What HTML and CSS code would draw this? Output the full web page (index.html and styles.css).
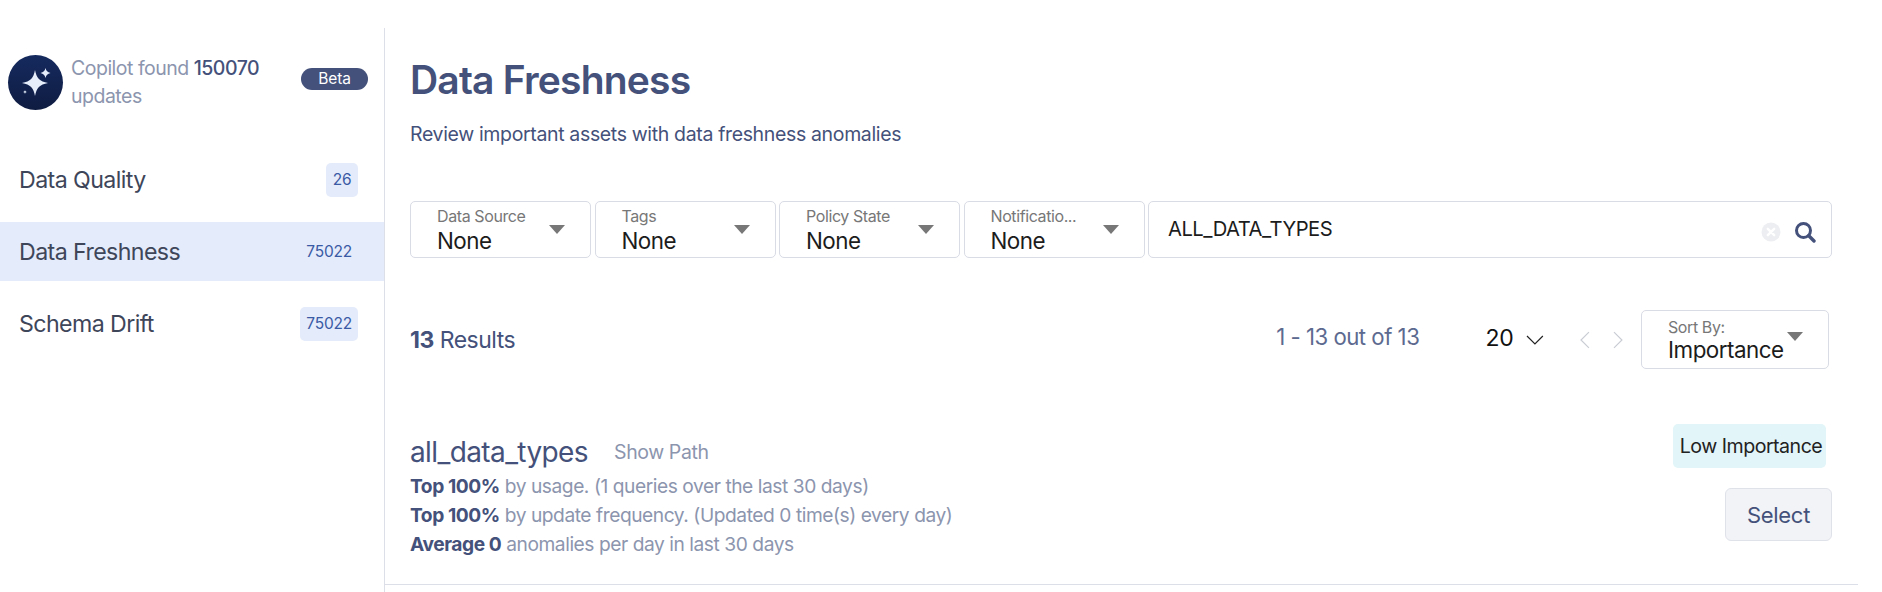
FILE: index.html
```html
<!DOCTYPE html>
<html lang="en">
<head>
<meta charset="utf-8">
<title>Data Freshness</title>
<link rel="stylesheet" href="styles.css">
</head>
<body>
<div class="page">
  <aside class="sidebar">
    <div class="copilot">
      <div class="copilot-icon">
        <svg width="55" height="55" viewBox="0 0 55 55">
          <path d="M27 15 C28.500 23 31.500 26.500 40 28 C31.500 29.500 28.500 33 27 41 C25.500 33 22.500 29.500 14 28 C22.500 26.500 25.500 23 27 15Z" fill="#e6edfb"/>
          <path d="M37.500 13 C38.200 16 39.500 17.300 42.500 18 C39.500 18.700 38.200 20 37.500 23 C36.800 20 35.500 18.700 32.500 18 C35.500 17.300 36.800 16 37.500 13Z" fill="#e6edfb"/>
          <path d="M17 35 C17.200 36.200 17.800 36.800 19 37 C17.800 37.200 17.200 37.800 17 39 C16.800 37.800 16.200 37.200 15 37 C16.200 36.800 16.800 36.200 17 35Z" fill="#e6edfb"/>
        </svg>
      </div>
      <p class="copilot-text">Copilot found <b>150070</b> updates</p>
      <span class="beta">Beta</span>
    </div>
    <nav class="nav">
      <a class="nav-item"><span>Data Quality</span><span class="count">26</span></a>
      <a class="nav-item active"><span>Data Freshness</span><span class="count">75022</span></a>
      <a class="nav-item"><span>Schema Drift</span><span class="count">75022</span></a>
    </nav>
  </aside>
  <main class="main">
    <h1 class="title">Data Freshness</h1>
    <p class="subtitle">Review important assets with data freshness anomalies</p>
    <div class="filters">
      <div class="select"><div class="select-text"><span class="select-label">Data Source</span><span class="select-value">None</span></div><i class="caret"></i></div>
      <div class="select"><div class="select-text"><span class="select-label">Tags</span><span class="select-value">None</span></div><i class="caret"></i></div>
      <div class="select"><div class="select-text"><span class="select-label">Policy State</span><span class="select-value">None</span></div><i class="caret"></i></div>
      <div class="select"><div class="select-text"><span class="select-label">Notificatio...</span><span class="select-value">None</span></div><i class="caret"></i></div>
      <div class="search">
        <span class="search-text">ALL_DATA_TYPES</span>
        <svg class="clear" width="20" height="20" viewBox="0 0 20 20"><circle cx="10" cy="10" r="9.500" fill="#eceef1"/><path d="M6.800 6.800 13.200 13.200M13.200 6.800 6.800 13.200" stroke="#fff" stroke-width="2.400" stroke-linecap="round"/></svg>
        <svg class="magnifier" width="22" height="22" viewBox="0 0 22 22"><circle cx="9.500" cy="9.500" r="7" fill="none" stroke="#44517a" stroke-width="3"/><path d="M14.800 14.800 20 20" stroke="#44517a" stroke-width="3.400" stroke-linecap="round"/></svg>
      </div>
    </div>
    <div class="results-bar">
      <div class="results"><b>13</b> Results</div>
      <div class="range">1 - 13 out of 13</div>
      <div class="page-size">20</div>
      <svg class="chev-down" width="18" height="10" viewBox="0 0 18 10"><path d="M1 1 9 9 17 1" fill="none" stroke="#222" stroke-width="1.200"/></svg>
      <svg class="pager" width="10" height="18" viewBox="0 0 10 18"><path d="M9 1 1 9 9 17" fill="none" stroke="#c9ccd3" stroke-width="1.200"/></svg>
      <svg class="pager next" width="10" height="18" viewBox="0 0 10 18"><path d="M1 1 9 9 1 17" fill="none" stroke="#c9ccd3" stroke-width="1.200"/></svg>
      <div class="sort"><div class="select-text"><span class="select-label">Sort By:</span><span class="select-value sort-value">Importance</span></div><i class="caret sort-caret"></i></div>
    </div>
    <section class="asset">
      <div class="asset-info">
        <div class="asset-head"><span class="asset-name">all_data_types</span><span class="show-path">Show Path</span></div>
        <p class="asset-line"><b>Top 100%</b> by usage. (1 queries over the last 30 days)</p>
        <p class="asset-line"><b>Top 100%</b> by update frequency. (Updated 0 time(s) every day)</p>
        <p class="asset-line"><b>Average 0</b> anomalies per day in last 30 days</p>
      </div>
      <div class="asset-actions">
        <span class="importance">Low Importance</span>
        <button class="select-btn">Select</button>
      </div>
    </section>
  </main>
</div>
</body>
</html>
```

FILE: styles.css
```css
* { box-sizing: border-box; }
html, body { margin: 0; padding: 0; background: #fff; }
body { font-family: Inter, "Noto Sans", sans-serif; height: 592px; overflow: hidden; }
p, h1 { margin: 0; }
.page { display: flex; padding-top: 28px; height: 592px; }

.sidebar { width: 385px; flex: none; border-right: 1px solid #dcdfe8; }
.copilot { display: flex; align-items: center; padding: 27px 16px 0 8px; }
.copilot-icon { width: 55px; height: 55px; border-radius: 50%; flex: none; background: linear-gradient(180deg, #152a5e, #0f1c42); margin-right: 8px; }
.copilot-icon svg { display: block; }
.copilot-text { width: 205px; font-size: 19.500px; line-height: 27.500px; color: #8c95ae; letter-spacing: -0.5px; margin-right: 25px; }
.copilot-text b { font-weight: 500; color: #44517a; }
.beta { width: 67px; height: 22px; margin-top: -8px; border-radius: 11px; background: #44517a; color: #fff; font-size: 15.500px; line-height: 22px; text-align: center; letter-spacing: -0.1px; }

.nav { display: flex; flex-direction: column; gap: 13px; margin-top: 40px; }
.nav-item { display: flex; align-items: center; justify-content: space-between; height: 59px; padding: 0 26px 0 19px; font-size: 23.200px; color: #3e465a; letter-spacing: -0.6px; }
.nav-item.active { background: #e4ebfa; }
.count { height: 34px; padding: 0 6px; border-radius: 5px; background: #e4ebfa; color: #3a5aa5; font-size: 15.500px; line-height: 34px; letter-spacing: -0.2px; min-width: 32px; text-align: center; }

.main { flex: none; width: 1473px; padding-left: 25px; }
.title { font-size: 39px; line-height: 48px; font-weight: 600; color: #44517a; letter-spacing: -0.8px; margin-top: 28px; }
.subtitle { font-size: 19.500px; line-height: 28px; color: #44517a; letter-spacing: -0.35px; margin-top: 16px; }

.filters { display: flex; gap: 3.500px; margin-top: 53px; padding-right: 26px; }
.select { width: 181px; height: 57px; flex: none; display: flex; align-items: center; border: 1px solid #d9dbe5; border-radius: 5px; padding-left: 26px; position: relative; }
.select-text { display: flex; flex-direction: column; }
.select-label { font-size: 16px; line-height: 20px; color: #777; letter-spacing: -0.4px; }
.select-value { font-size: 22.400px; line-height: 25px; margin-top: 2px; color: #1c1c1c; letter-spacing: -0.5px; }
.sort-value { margin-top: 0; }
.caret { position: absolute; right: 25px; top: 23px; width: 0; height: 0; border-left: 8px solid transparent; border-right: 8px solid transparent; border-top: 9px solid #777; }
.search { flex: 1; height: 57px; display: flex; align-items: center; border: 1px solid #d9dbe5; border-radius: 5px; padding: 0 15px 0 19px; }
.search-text { flex: 1; font-size: 20.200px; line-height: 28px; color: #1c1c1c; letter-spacing: -0.5px; margin-top: -1px; }
.clear { margin-right: 13px; margin-top: 5px; }
.magnifier { margin-top: 5px; }

.results-bar { display: flex; align-items: center; height: 59px; margin-top: 52px; padding-right: 29px; }
.results { font-size: 23px; color: #44517a; letter-spacing: -0.5px; width: 873px; }
.results b { font-weight: 700; }
.range { font-size: 22.200px; color: #5d6a90; letter-spacing: -0.5px; width: 211px; margin-top: -6px; }
.page-size { font-size: 23px; color: #111; letter-spacing: -0.5px; width: 41px; margin-top: -4px; }
.chev-down { margin-right: 36px; }
.pager { margin-right: 23px; }
.pager.next { margin-right: 18px; }
.sort { width: 188px; height: 59px; flex: none; display: flex; align-items: center; border: 1px solid #d9dbe5; border-radius: 5px; padding-left: 26px; position: relative; }
.sort-caret { right: 25px; top: 21px; }

.asset { display: flex; justify-content: space-between; height: 216px; margin-left: -25px; padding: 55px 26px 0 25px; border-bottom: 1px solid #dcdfe8; }
.asset-info { padding-top: 10px; }
.asset-head { display: flex; align-items: center; gap: 26px; margin-bottom: 2px; }
.asset-name { font-size: 28px; line-height: 36px; color: #44517a; letter-spacing: -0.6px; }
.show-path { font-size: 19.500px; color: #8c95ae; letter-spacing: -0.4px; }
.asset-line { font-size: 19.200px; line-height: 28.800px; color: #8c95ae; letter-spacing: -0.45px; }
.asset-line b { font-weight: 700; color: #44517a; }
.asset-actions { display: flex; flex-direction: column; align-items: flex-end; }
.importance { width: 153px; height: 44px; margin-right: 6px; padding-left: 3px; border-radius: 5px; background: #e2f5f8; color: #222; font-size: 19.600px; line-height: 44px; text-align: center; letter-spacing: -0.5px; }
.select-btn { width: 107px; height: 53px; margin-top: 20px; border: 1px solid #e0e2ea; border-radius: 6px; background: #f1f3f7; color: #44517a; font-family: inherit; font-size: 22px; letter-spacing: -0.3px; padding: 0; }
```
